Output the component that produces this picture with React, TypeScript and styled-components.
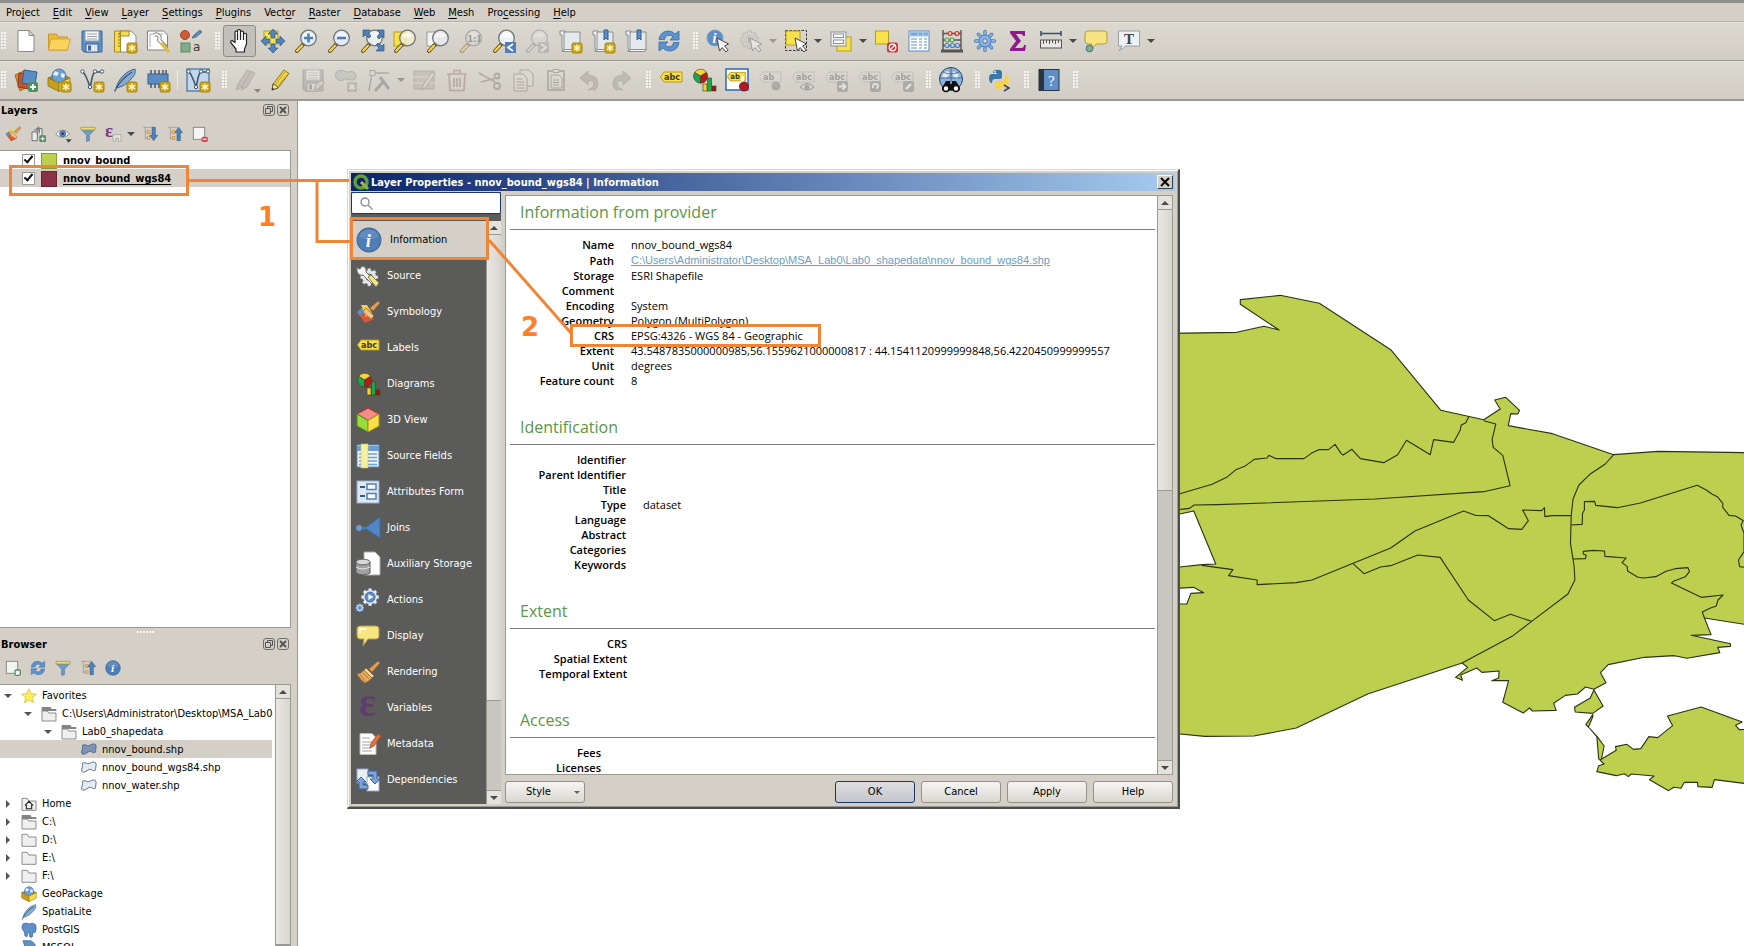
import React from 'react';
import styled, { createGlobalStyle, css } from 'styled-components';

const UI = '"DejaVu Sans Condensed", "DejaVu Sans", sans-serif';
const DOC = '"Open Sans", "Noto Sans", sans-serif';
const FACE = '#d4d0c8';
const LINE = '#9c9990';
const ORANGE = '#f08536';

const Global = createGlobalStyle`
  *, *::before, *::after { box-sizing: border-box; }
  html, body { margin: 0; height: 100%; overflow: hidden; background: #fff; }
  body { font: 11px/18px ${UI}; color: #000; }
  button, input { font: inherit; color: inherit; margin: 0; }
  ul { list-style: none; margin: 0; padding: 0; }
  svg { display: block; flex: none; overflow: visible; }
`;

/* ---------- icons ---------- */

const Lens = ({ body = '#eef2f6', x = 0 }: { body?: string; x?: number }) => (
  <g transform={`translate(${x} 0)`}>
    <path d="M9.500 15 3 22" stroke="#5c4d1c" strokeWidth="4" strokeLinecap="round" />
    <path d="M8 16.700 3.200 21.800" stroke="#f5d152" strokeWidth="2.400" strokeLinecap="round" />
    <circle cx="14.500" cy="9" r="7.800" fill={body} stroke="#6f7476" strokeWidth="1.300" />
    <path d="M9 7a6 6 0 0 1 11 0q-5 3-11 0z" fill="#fff" opacity=".6" />
  </g>
);
const Star = () => (
  <g>
    <rect x="14" y="14" width="10" height="10" rx="1.500" fill="#c9a419" stroke="#a8860c" />
    <path d="M19 15.500v7M15.800 17.200l6.400 3.600M22.200 17.200l-6.400 3.600" stroke="#fff6c8" strokeWidth="1.400" />
  </g>
);
const Cursor = ({ x = 0, y = 0 }: { x?: number; y?: number }) => (
  <path transform={`translate(${x} ${y})`} d="M11 9l2.500 13 2.700-3.500 3.800 4.500 2.200-2-3.700-4 4-2z" fill="#fff" stroke="#444" strokeWidth="1" />
);
const Tag = ({ t = 'abc' }: { t?: string }) => (
  <g>
    <path d="M5 4h18v10H5L1.500 9z" fill="#f7e04c" stroke="#b89a1c" />
    <text x="5" y="12" fontSize="9" fontWeight="700" fontFamily="DejaVu Sans Condensed" fill="#40391a">{t}</text>
  </g>
);
const Bars = () => (
  <g stroke="#3c3c20" strokeWidth=".6">
    <path d="M8.500 8 2.600 4.500A7 7 0 0 1 8.500 1.200a7 7 0 0 1 6 3z" fill="#f7d33c" />
    <path d="M8.500 8v7.200A7 7 0 0 1 2.600 4.500z" fill="#1ea550" />
    <path d="M8.500 8l6.100-3.500a7 7 0 0 1-6.100 10.700z" fill="#b81a1a" />
    <rect x="11" y="16" width="4" height="7" fill="#f5cf2c" />
    <rect x="15.500" y="10" width="4" height="13" fill="#1ea550" />
    <rect x="20" y="18" width="4" height="5" fill="#9c1616" />
  </g>
);
const Cog = ({ c = '#6f9bd0', s = '#4977a8', w = '#fff' }: { c?: string; s?: string; w?: string }) => (
  <g>
    <g stroke={s} strokeWidth="4.500">
      <path d="M12 1.500v21M1.500 12h21M4.600 4.600l14.800 14.800M19.400 4.600 4.600 19.400" />
    </g>
    <circle cx="12" cy="12" r="8.500" fill={s} />
    <g stroke={c} strokeWidth="3">
      <path d="M12 2v20M2 12h20M5 5l14 14M19 5 5 19" />
    </g>
    <circle cx="12" cy="12" r="8" fill={c} />
    <circle cx="12" cy="12" r="4" fill={w} stroke={s} strokeWidth=".8" />
  </g>
);
const InfoDisc = () => (
  <g>
    <circle cx="12" cy="12" r="11" fill="#4f7db5" stroke="#3c689c" />
    <path d="M3 9a9.500 9.500 0 0 1 18 0q-9 5-18 0z" fill="#7ba0cc" opacity=".45" />
    <text x="9" y="18" fontSize="17" fontStyle="italic" fontWeight="700" fontFamily="Liberation Serif" fill="#fff">i</text>
  </g>
);
const RefreshShape = () => (
  <g fill="#5c93cf" stroke="#3a6ba4" strokeWidth=".8">
    <path d="M2 10.500C3 1 14 0 18 5l4-3v9h-9l3-3c-3-3-8-2-8.500 2.500z" />
    <path d="M22 13.500C21 23 10 24 6 19l-4 3v-9h9l-3 3c3 3 8 2 8.500-2.500z" />
  </g>
);
const Page = ({ fill = '#fff' }: { fill?: string }) => <path d="M4 1.500h11l5 5v16H4z M15 1.500v5h5" fill={fill} stroke="#8a8a86" />;
const Scroll = () => (
  <g>
    <path d="M2 2h5v18q0 2.500-2.500 2.500H4Q5 20 4 18V6H2z" fill="#f2f2f2" stroke="#898d90" />
    <path d="M6 3h16v17.500H6z" fill="#e6e9ec" stroke="#898d90" />
    <path d="M4 22.500h16q2 0 2-2H6q0 2-2 2" fill="#fafafa" stroke="#898d90" />
  </g>
);
const Cube = () => (
  <g stroke="#8c7210" strokeWidth=".8">
    <path d="M1 10l11-5 11 5-11 5z" fill="#a6861a" />
    <circle cx="12" cy="8" r="7" fill="#6d9fd4" stroke="#3f6fa5" />
    <path d="M8 3l4 2-2 3-4-1zM14 5l4 1-1 4-3-1z" fill="#e7eff7" stroke="none" />
    <path d="M1 10l11 5v8.500L1 18z" fill="#c89f1c" />
    <path d="M23 10l-11 5v8.500L23 18z" fill="#f6dc45" />
  </g>
);
const Feather = () => (
  <g>
    <path d="M3 20C6 10 13 3 22 1c1 4-1 7-4 10-4 5-9 8-15 9z" fill="#86abd2" stroke="#3b6590" />
    <path d="M1.500 23.500C5 16 11 9 19 4" stroke="#3b5874" strokeWidth="1.300" fill="none" />
  </g>
);
const VLine = ({ c = '#40586a' }: { c?: string }) => (
  <g stroke={c} fill="#fff">
    <path d="M3 4c3 3 5 9 7 15 2-6 2-14 5-15h7" fill="none" strokeWidth="1.600" />
    <circle cx="2.500" cy="3.500" r="1.700" /><circle cx="10" cy="19" r="1.700" /><circle cx="15" cy="3.500" r="1.700" /><circle cx="22" cy="3.500" r="1.700" />
  </g>
);
const Pencil = () => (
  <g>
    <path d="M4 22l1-6L16 2l5 3.500L10 20z" fill="#f3d64a" stroke="#8c7422" />
    <path d="M7 17 17 4M9 19 20 6" stroke="#b8982a" strokeWidth="1" />
    <path d="M4 22l1-6q4 1 5 4z" fill="#f3e4c0" stroke="#6a5a2a" /><path d="M4 22l.5-2.500L6 21z" fill="#222" />
  </g>
);
const Disk = () => (
  <g>
    <path d="M2 2h20v21H4l-2-2z" fill="#5f8fc6" stroke="#3d6898" />
    <rect x="5" y="2" width="14" height="10" fill="#f6f6f6" stroke="#8a9aac" />
    <path d="M7 5h10M7 7.500h10M7 10h10" stroke="#9aa3ad" />
    <rect x="6" y="15" width="12" height="8" fill="#dfe5ec" stroke="#3d6898" /><rect x="8" y="16.500" width="3" height="5" fill="#3d6898" />
  </g>
);
const Brush = () => (
  <g>
    <path d="M22 1 13 9l3 3 8-9z" fill="#e0a252" stroke="#9c6a28" strokeWidth=".8" />
    <path d="M10 8l8 8-2 2-8-8z" fill="#f2d7a5" stroke="#9c6a28" strokeWidth=".8" />
    <path d="M8 10l8 8q-4 4-7 5-4-2-8-9 4 0 7-4z" fill="#e2aa60" stroke="#9c6a28" strokeWidth=".8" />
    <path d="M4 15l5 6M7 13l6 6" stroke="#b97d36" />
  </g>
);
const PaintBrush = () => (
  <g>
    <path d="M1 12l8 11 9-4L8 7z" fill="#d9553b" /><path d="M1 12l7-6 3 4-7 6z" fill="#5d8dc4" /><path d="M5 5h6l5 8-6 4z" fill="#f2cf45" />
    <path d="M22 1 14 8l3 3 7-8z" fill="#e0a252" stroke="#9c6a28" strokeWidth=".8" />
    <path d="M10 8l8 8-3 3-8-7z" fill="#eec488" stroke="#9c6a28" strokeWidth=".8" />
  </g>
);
const Arrows = ({ c = '#5584bb' }: { c?: string }) => (
  <g fill={c} stroke="#2f587f" strokeWidth=".7">
    <path d="M12 0l5 5h-3v4h-4V5H7zM12 24l5-5h-3v-4h-4v4H7zM0 12l5-5v3h4v4H5v3zM24 12l-5-5v3h-4v4h4v3z" />
  </g>
);
const Funnel = () => (
  <g>
    <path d="M2 5h20l-8 9v8l-4 1v-9z" fill="#6f9cc9" stroke="#44709c" />
    <path d="M1.500 2h21v4h-21z" fill="#efdc6a" stroke="#9a8a3c" />
  </g>
);
const TreeMarks = () => (
  <g>
    <path d="M2 2h14M5 2v18M5 9h5M5 18h5" stroke="#8e8e8a" fill="none" />
    <rect x="8" y="7" width="4" height="4" fill="#f7c27a" stroke="#d98b2b" /><rect x="8" y="16" width="4" height="4" fill="#f7c27a" stroke="#d98b2b" />
  </g>
);
const Folder = () => <path d="M1.500 3.500h8l2 4h11v14h-21z" fill="#efefef" stroke="#87878a" strokeWidth="1.400" />;
const Drawer = () => (
  <g><path d="M1 1.500h13l2 3h7v3H1z" fill="#848484" /><path d="M1.500 7.500h8l2 3h11v12h-21z" fill="#efefef" stroke="#87878a" strokeWidth="1.400" /></g>
);
const Poly = ({ c = '#e3ebf3' }: { c?: string }) => (
  <path d="M2 5c4-3 7 2 11 0 4-2 7-3 9-1 2 4-1 8 0 11-4 3-6-2-10-1-4 3-8 6-11 3C0 13 4 9 2 5z" fill={c} stroke="#4c6278" strokeWidth="1.300" />
);
const Wrench = () => (
  <path d="M2 2l4 3 2-1V1c4 0 6 3 5 7l10 11q1 4-3 4L9 12c-4 1-7-1-7-6l3 2" fill="#f4f4f4" stroke="#6e6e6a" strokeWidth="1" />
);
const Bubble = () => <path d="M4 2h16q3 0 3 3v7q0 3-3 3h-8l-5 7 1-7H4q-3 0-3-3V5q0-3 3-3z" fill="#f7e583" stroke="#b49c39" />;

const ICONS: Record<string, React.ReactNode> = {
  new: <Page />,
  open: <g><path d="M1.500 5h8l2 3h9v13h-19z" fill="#eab93a" stroke="#c9962a" /><path d="M1.500 21 4 10h19.500l-3 11z" fill="#fad45c" stroke="#d7a536" /></g>,
  save: <Disk />,
  newLayout: <g><path d="M7 2h11l5 5v16H7z" fill="#fff" stroke="#8a8a86" /><path d="M1.500 2h6v21h-6zM7 2h9v5H7z" fill="#f7da4e" stroke="#a68a24" /><path d="M5 5h2M5 8h2M5 11h2M5 14h2M5 17h2" stroke="#8a7420" /><Star /></g>,
  layouts: <g><path d="M1.500 2h16l4 4v15h-20z" fill="#fff" stroke="#7d8285" /><path d="M4 18V5h13" stroke="#a6abae" fill="none" /><path d="M8 6c4-2 7 2 5 5l8 8" stroke="#8b8b87" strokeWidth="4" fill="none" /><path d="M8 6c4-2 7 2 5 5l4 4" stroke="#f2f2f2" strokeWidth="2.200" fill="none" /><path d="M16 15l6 7" stroke="#e1bd3f" strokeWidth="3.500" strokeLinecap="round" /></g>,
  styles: <g><circle cx="6" cy="6" r="4.500" fill="#cf5b33" stroke="#a34624" /><path d="M13 9l2-3 6-5 2 2-6 5z" fill="#5f88b6" stroke="#3f6389" strokeWidth=".8" /><rect x="2" y="14" width="9" height="9" fill="#7fae86" stroke="#5b8a62" /><text x="14" y="22" fontSize="12" fontFamily="DejaVu Sans" fill="#3a3a3a">a</text></g>,
  hand: <path d="M8 23v-3l-5-6q-1-2 1-2.500l3 2V3q1-2 2.500 0V1.500q1.500-2 3 0V3q1.500-2 3 0v2q1.800-1.500 3 0v10l-2 5v3zM9.500 4v7M12.500 3v8M15.500 4v7" fill="#fff" stroke="#222" strokeWidth="1.200" />,
  pan: <g><rect x="3" y="2" width="14" height="13" fill="#f8e24a" stroke="#b49c28" /><Arrows /></g>,
  zoomIn: <g><Lens body="#e3ecf5" /><path d="M14.500 4.500v9M10 9h9" stroke="#4e7fb8" strokeWidth="2.600" /></g>,
  zoomOut: <g><Lens body="#e3ecf5" /><path d="M10 9h9" stroke="#4e7fb8" strokeWidth="2.600" /></g>,
  zoomFull: <g><Lens body="#f0f4f8cc" /><path d="M3 1h7L8 3l3 4-2 2-4-3-2 2zM24 1v8l-2-2-3 3-2-2 3-4-3-3zM24 22h-8l3-3-3-3 2-2 4 3 2-2z" fill="#4e7fb8" stroke="#2f587f" strokeWidth=".7" /></g>,
  zoomSel: <g><rect x="1" y="3" width="12" height="14" fill="#f8e24a" stroke="#b49c28" /><Lens body="#f3eccfd9" /></g>,
  zoomLayer: <g><rect x="1" y="3" width="12" height="14" fill="#f4f4f4" stroke="#9a9a96" /><Lens body="#e9eaecd9" /></g>,
  zoomNative: <g opacity=".45"><Lens body="#dcdcdc" /><text x="8.500" y="12.500" fontSize="9" fontWeight="700" fontFamily="DejaVu Sans Condensed" fill="#555">1:1</text></g>,
  zoomLast: <g><Lens /><rect x="13" y="13" width="11" height="11" fill="#4e7fb8" /><path d="M21 15l-5 3.500 5 3.500" stroke="#fff" strokeWidth="1.800" fill="none" /></g>,
  zoomNext: <g opacity=".35" filter="grayscale(1)"><Lens body="#dcdcdc" /><rect x="13" y="13" width="11" height="11" fill="#8e8e8a" /><path d="M16 15l5 3.500-5 3.500" stroke="#fff" strokeWidth="1.800" fill="none" /></g>,
  newMap: <g><Scroll /><Star /></g>,
  newMark: <g><Scroll /><path d="M13 1h4v10l-2-2-2 2z" fill="#5b8cc4" stroke="#32608f" /><Star /></g>,
  marks: <g><Scroll /><path d="M13 1h4v10l-2-2-2 2z" fill="#5b8cc4" stroke="#32608f" /></g>,
  refresh: <RefreshShape />,
  identify: <g><circle cx="9" cy="9" r="8" fill="#5f8fc6" stroke="#7ba0c8" /><text x="6.500" y="14" fontSize="14" fontStyle="italic" fontWeight="700" fontFamily="Liberation Serif" fill="#fff">i</text><Cursor /></g>,
  action: <g opacity=".4"><g transform="scale(.88)"><Cog c="#c9c9c5" s="#7e7e7a" w="#e4e4e0" /></g><path d="M9 7.500l5 3-5 3z" fill="#777" /><Cursor /></g>,
  select: <g><rect x="1.500" y="1.500" width="21" height="20" fill="none" stroke="#333" strokeDasharray="2.500 1.500" /><rect x="2" y="2" width="14" height="14" fill="#f8e24a" stroke="#b49c28" /><Cursor /></g>,
  selectForm: <g><rect x="8" y="8" width="14" height="14" fill="#f8e24a" stroke="#b49c28" /><rect x="2" y="3" width="15" height="14" fill="#f2f2f2" stroke="#8a8f92" /><rect x="4.500" y="5" width="10" height="3.500" fill="#fff" stroke="#8a8f92" /><rect x="4.500" y="11" width="10" height="3.500" fill="#fff" stroke="#8a8f92" /></g>,
  deselect: <g><rect x="1.500" y="2" width="13" height="13" fill="#f8e24a" stroke="#b49c28" /><rect x="13" y="13.500" width="11" height="10" rx="2" fill="#d8343a" /><circle cx="18.500" cy="18.500" r="3.300" fill="none" stroke="#fff" strokeWidth="1.300" /><path d="M16 21l5-5" stroke="#fff" strokeWidth="1.300" /></g>,
  table: <g><rect x="2" y="2" width="20" height="20" fill="#fff" stroke="#5c88b8" /><rect x="2.500" y="2.500" width="19" height="5" fill="#9cc0e6" /><path d="M4 5h6M12 5h3M17 5h4M4 10h6M4 13h6M4 16h6M4 19h6M12 10h3M12 13h3M12 16h3M12 19h3M17 10h3M17 13h3M17 16h3M17 19h3" stroke="#5b8cc4" /></g>,
  abacus: <g><path d="M3 1v20M21 1v20M3 4.500h18M3 11h18M3 16.500h18" stroke="#555" strokeWidth="1.400" /><path d="M1 22h22" stroke="#555" strokeWidth="3" /><g strokeWidth="1.200"><circle cx="10" cy="4.500" r="2" fill="#f4c0b8" stroke="#c23b30" /><circle cx="17" cy="4.500" r="2" fill="#f4c0b8" stroke="#c23b30" /><circle cx="7" cy="11" r="2" fill="#c8e8c2" stroke="#5e9e55" /><circle cx="12" cy="11" r="2" fill="#c8e8c2" stroke="#5e9e55" /><circle cx="7" cy="16.500" r="2" fill="#c2d8ee" stroke="#4e7fb8" /><circle cx="12.500" cy="16.500" r="2" fill="#c2d8ee" stroke="#4e7fb8" /><circle cx="17.500" cy="16.500" r="2" fill="#c2d8ee" stroke="#4e7fb8" /></g></g>,
  cog: <g><g stroke="#4a7dba" strokeWidth="3.400" strokeLinecap="round"><path d="M12 2.500v19M2.500 12h19M5.300 5.300l13.400 13.400M18.700 5.300 5.300 18.700" /></g><g stroke="#8ab2e0" strokeWidth="1.800" strokeLinecap="round"><path d="M12 2.500v19M2.500 12h19M5.300 5.300l13.400 13.400M18.700 5.300 5.300 18.700" /></g><circle cx="12" cy="12" r="6" fill="#8ab2e0" stroke="#4a7dba" /><circle cx="12" cy="12" r="2.300" fill="#dcd8d1" stroke="#4a7dba" /></g>,
  sigma: <path d="M4 2h15v5h-2q0-2-3-2H10l5 7-6 7h6q3 0 3-3h2l-1 6H4v-2l6-8-6-8z" fill="#8f1a8c" />,
  ruler: <g><path d="M2 4.500h20M2 2v5M22 2v5" stroke="#33536f" strokeWidth="1.600" /><rect x="1.500" y="11" width="21" height="8" fill="#e8e8e4" stroke="#555" /><path d="M4.500 11v4M7.500 11v3M10.500 11v4M13.500 11v3M16.500 11v4M19.500 11v3" stroke="#555" /></g>,
  tip: <g><Bubble /><circle cx="5.500" cy="19.500" r="3.400" fill="#7fae86" stroke="#4b6f9a" /></g>,
  textNote: <g><path d="M1.500 2h21v15H9l-7 5 3-5H1.500z" fill="#eef2f6" stroke="#9aa0a5" /><text x="7" y="14.500" fontSize="15" fontWeight="700" fontFamily="Liberation Serif" fill="#444">T</text></g>,
  dataSource: <g><path d="M1 7l9-4 3 16-7 4z" fill="#dd8a2e" stroke="#a8641c" /><path d="M5 5l13 2-3 14-11-2z" fill="#c6532f" stroke="#8e3b1f" /><path d="M10 2l13 2-2 13-13-2z" fill="#5b8cc4" stroke="#335f90" /><rect x="14" y="14" width="10" height="10" rx="2" fill="#4b8f63" /><path d="M19 16v6M16 19h6" stroke="#fff" strokeWidth="1.800" /></g>,
  geopackage: <g><Cube /><Star /></g>,
  shapefile: <g><VLine /><Star /></g>,
  spatialite: <g><Feather /><Star /></g>,
  memory: <g><path d="M5 2v18M9 2v18M13 2v18M17 2v18M20 2v18" stroke="#444c55" strokeWidth="1.400" /><rect x="2" y="6" width="20" height="10" fill="#5b8cc4" stroke="#335f90" /><Star /></g>,
  virtual: <g><rect x="1" y="1" width="22" height="22" fill="#c3d7ec" stroke="#5b83ae" strokeWidth="1.500" /><VLine /><Star /></g>,
  editsOff: <g opacity=".4"><path d="M1 22l2-6L12 2l5 2L7 19z" fill="#a7a19a" stroke="#7e7973" /><path d="M6 22l2-5L16 3l4 2-8 14z" fill="#a7a19a" stroke="#7e7973" /><path d="M19 21h7l-3.500 4z" fill="#222" /></g>,
  pencil: <Pencil />,
  saveEdits: <g opacity=".35"><g filter="grayscale(1)"><Disk /></g><path d="M13 22l2-6 6-4 2 3-6 6z" fill="#c9c4bb" stroke="#6e6a64" /></g>,
  addPoly: <g opacity=".35"><path d="M2 5c4-6 9 0 13-1 6-2 9 4 6 7-4 3-8-2-12 1-5 2-9-3-7-7z" fill="#a8b4a6" stroke="#667" /><rect x="13" y="14" width="10" height="10" rx="1" fill="#8d8a80" /><path d="M18 15.500v7M15 17.200l6 3.600M21 17.200l-6 3.600" stroke="#fff" strokeWidth="1.300" /></g>,
  vertex: <g opacity=".38" stroke="#666" fill="none"><path d="M5 5 2 23M5 5h17" strokeWidth="1.400" /><rect x="3" y="2.500" width="5" height="5" fill="#ddd" /><path d="M8 23l9-10M13 9l9 12" strokeWidth="3" /></g>,
  attrs: <g opacity=".35"><rect x="2" y="3" width="20" height="18" fill="#a8a58c" stroke="#77746a" /><path d="M2 9h20M2 15h20" stroke="#e4e1da" /><path d="M10 22l1-5L20 4l3 2-9 13z" fill="#d8d4cc" stroke="#66635c" /></g>,
  trash: <g opacity=".35" stroke="#8c5c58" strokeWidth="1.700" fill="none"><path d="M2 6h20M9 5V2.500h6V5M4 6l1 16.500h14L20 6M9 10v9M12 10v9M15 10v9" /></g>,
  cut: <g opacity=".4" stroke="#77736c" strokeWidth="1.800" fill="none"><path d="M1 5l16 9M3 14 22 9" /><circle cx="19" cy="8" r="2.500" /><circle cx="19" cy="18" r="3" /></g>,
  copy: <g opacity=".45" fill="#e0ddd6" stroke="#77736c"><path d="M9 2h9l4 4v12H9z" /><path d="M3 6h9l4 4v13H3z" /><path d="M5.500 11h6M5.500 14h8M5.500 17h8M5.500 20h8" /></g>,
  paste: <g opacity=".45" fill="#e0ddd6" stroke="#77736c"><rect x="4" y="3" width="16" height="19" strokeWidth="1.600" /><path d="M9 1.500h6v3H9z" /><path d="M7 7h8l3 3v10H7zM9 12h6M9 14.500h6M9 17h6" /></g>,
  undo: <path opacity=".4" d="M3 10l8-7v4q10 0 10 9 0 3-3 6-5-1-7 0 6-2 6-6t-6-3v4z" fill="#a18d8a" stroke="#8a7673" />,
  redo: <path opacity=".4" d="M21 10l-8-7v4q-10 0-10 9 0 3 3 6 5-1 7 0-6-2-6-6t6-3v4z" fill="#949a92" stroke="#7c8279" />,
  label: <Tag />,
  diagram: <Bars />,
  labelPin: <g><rect x="1" y="1" width="22" height="21" fill="#fff" stroke="#2f68b5" strokeWidth="1.500" /><g transform="translate(1 1) scale(.85)"><Tag t="ab" /></g><path d="M17.500 8v9" stroke="#fff" strokeWidth="3" /><circle cx="19" cy="18.500" r="4.500" fill="#b11c22" stroke="#861318" /></g>,
  lab1: <g opacity=".35"><g filter="grayscale(1)"><Tag t="ab" /></g><circle cx="18" cy="18" r="4.500" fill="#666" /></g>,
  lab2: <g opacity=".35"><g filter="grayscale(1)"><Tag /></g><path d="M9 19q7-7 14 0-7 6-14 0z" fill="#ddd" stroke="#333" /><circle cx="16" cy="19" r="2.500" fill="#555" /></g>,
  lab3: <g opacity=".35"><g filter="grayscale(1)"><Tag /></g><rect x="13" y="13" width="11" height="11" rx="2" fill="#666" /><path d="M15 18.500h6M18.500 15.500l3 3-3 3" stroke="#fff" strokeWidth="2" fill="none" /></g>,
  lab4: <g opacity=".35"><g filter="grayscale(1)"><Tag /></g><rect x="13" y="13" width="11" height="11" rx="2" fill="#666" /><path d="M16 20v-2q0-2 2.500-2t2.500 2-2 2.500" stroke="#fff" strokeWidth="1.800" fill="none" /></g>,
  lab5: <g opacity=".35"><g filter="grayscale(1)"><Tag /></g><rect x="13" y="13" width="11" height="11" rx="2" fill="#666" /><path d="M16 21l5-5" stroke="#fff" strokeWidth="2.400" /></g>,
  search: <g><circle cx="12" cy="11" r="11.500" fill="#8db2dc" stroke="#2c4460" /><path d="M5 4q5-2 6 2l-4 4-4-1zM14 3l6 4-2 4-4-3z" fill="#dfeaf5" /><path d="M12 0v20M1 10h22M4 4q8 4 16 0" stroke="#35506e" fill="none" strokeWidth=".7" /><path d="M3 20l4-7h4v3h2v-3h4l4 7v2H3z" fill="#111" /><circle cx="7" cy="20.500" r="3" fill="#fff" stroke="#111" strokeWidth="1.600" /><circle cx="17" cy="20.500" r="3" fill="#fff" stroke="#111" strokeWidth="1.600" /></g>,
  python: <g><path d="M8 2q5-1 6 2v5q0 2-2 2H7q-3 0-3 4-3 0-3-5 0-4 3-4h5V5H5q0-3 3-3z" fill="#3c77a9" /><path d="M13 21q-5 1-6-2v-4q0-2 2-2h5q3 0 3-6 4 0 4 5t-4 5h-5v1h4q0 2-3 3z" fill="#f8d347" /><circle cx="7" cy="3.800" r=".9" fill="#fff" /><path d="M16 17l5 3-5 3" stroke="#444" strokeWidth="1.500" fill="none" /></g>,
  help: <g><rect x="2" y="1.500" width="20" height="21" fill="#5f8fc6" stroke="#2a3542" /><rect x="2" y="1.500" width="5" height="21" fill="#2a3542" /><text x="11" y="17.500" fontSize="15" fontFamily="Liberation Serif" fill="#fff">?</text></g>,
  paint: <PaintBrush />,
  addGroup: <g><path d="M3 9h8v13H3zM6 6h8v3M9 4h9v13" fill="#ecece8" stroke="#6d7276" strokeWidth="1.500" /><path d="M11 13V3q2-4 3 0v8" stroke="#6d7276" fill="none" strokeWidth="1.300" /><rect x="14" y="14" width="10" height="10" rx="2" fill="#4b8f63" /><path d="M19 16v6M16 19h6" stroke="#fff" strokeWidth="1.800" /></g>,
  eye: <g><path d="M1 12q10-12 21 0-11 10-21 0z" fill="#eef3f8" stroke="#7f8b97" strokeWidth="1.300" /><circle cx="11.500" cy="11.500" r="4.500" fill="#5f8fc6" stroke="#2f4c6c" /><circle cx="11.500" cy="11.500" r="1.800" fill="#1d2b3a" /><path d="M16 20h9l-4.500 5z" fill="#444" /></g>,
  funnel: <Funnel />,
  exprFilter: <g><text x="0" y="16" fontSize="28" fontWeight="700" fontFamily="Liberation Serif" fill="#7b3a82">ε</text><path d="M12 13h12v10h-4v-5h-4v5h-4z" fill="#e4e4e0" stroke="#9a9a96" /></g>,
  expand: <g><TreeMarks /><path d="M15 2h5v12h3.500l-6 8-6-8H15z" fill="#4e82bd" stroke="#2f587f" strokeWidth=".8" /></g>,
  collapse: <g><TreeMarks /><path d="M15 22h5V10h3.500l-6-8-6 8H15z" fill="#4e82bd" stroke="#2f587f" strokeWidth=".8" /></g>,
  remove: <g><rect x="2" y="2" width="17" height="18" fill="#f4f4f2" stroke="#8a8a86" strokeWidth="1.500" /><rect x="14" y="16" width="10" height="8" rx="3" fill="#d8454a" /><path d="M16 20h6" stroke="#fff" strokeWidth="1.800" /></g>,
  addLayer: <g><rect x="2" y="2" width="17" height="18" fill="#f4f4f2" stroke="#8a8a86" strokeWidth="1.500" /><rect x="15" y="15" width="8" height="8" rx="2" fill="#fff" stroke="#4b8f63" strokeWidth="2" /></g>,
  info: <InfoDisc />,
  star: <path d="M12 1l3.200 7.500 8 .6-6.200 5.200 2 8L12 18l-7 4.300 2-8L.8 9.100l8-.6z" fill="#fbee5c" stroke="#d4b428" />,
  folder: <Folder />,
  drawer: <Drawer />,
  home: <g><Folder /><path d="M6 14l6-6 6 6M8 13v6h8v-6" stroke="#222" strokeWidth="1.600" fill="none" /></g>,
  poly: <Poly />,
  polySel: <Poly c="#7d93b8" />,
  gpkg: <Cube />,
  feather: <Feather />,
  elephant: <path d="M3 3q5-3 9 0 6-3 10 1 2 6-1 12l-3-1-1 7q-3 2-4 0l-1-7-2 2-1 5-3-1-1-6Q-1 9 3 3z" fill="#5f8fc6" stroke="#335f90" />,
  mssql: <path d="M3 1h11q8 3 8 11v12H10z" fill="#5f8fc6" stroke="#335f90" />,
  source: <g><g transform="translate(3 3) scale(.85)"><Cog c="#e4e7ea" s="#8b97a3" w="#5b5b59" /></g><path d="M1 3q1 2 3 2l2-3q5 1 4 6l9 9-3 3-9-9Q2 12 1 7z" fill="#f4f4f4" stroke="#6e6e6a" /><path d="M12 13l3-2 8 8-3 4z" fill="#efe39a" stroke="#8a7c3c" /></g>,
  cube3d: <g stroke="#8c3b1c" strokeWidth="1"><path d="M12 0l11 6-11 6.500L1 6z" fill="#f58a8a" stroke="#c22626" /><path d="M1 6l11 6.500V24L1 18z" fill="#9adb3c" stroke="#538c18" /><path d="M23 6l-11 6.500V24l11-6z" fill="#f8e048" stroke="#b0941c" /></g>,
  fields: <g><rect x="1" y="1" width="22" height="22" fill="#f0f4f8" stroke="#5c88b8" /><path d="M1 2h22v5H1z" fill="#6d9fd4" /><path d="M3 10h18M3 13.500h18M3 17h18M3 20.500h18" stroke="#6d9fd4" strokeWidth="1.500" /><rect x="5" y="0" width="7" height="24" fill="#f4f0a0" stroke="#cfc560" strokeWidth=".6" /></g>,
  form: <g><rect x="1" y="1" width="22" height="22" fill="#dce8f4" stroke="#8fb0d2" /><path d="M4 7h5M4 16h5" stroke="#3a5878" strokeWidth="2" /><rect x="11" y="4" width="9" height="5.500" fill="#fff" stroke="#4e7fb8" strokeWidth="1.500" /><rect x="11" y="13.500" width="9" height="5.500" fill="#fff" stroke="#4e7fb8" strokeWidth="1.500" /></g>,
  joins: <g><circle cx="3" cy="12" r="3" fill="#6b9bd2" /><path d="M6 12h5" stroke="#4e82bd" strokeWidth="2" /><path d="M24 1v21L9 12z" fill="#4e86c6" stroke="#3a6ca6" /></g>,
  storage: <g><path d="M8 0h11l5 5v18H8z" fill="#fff" stroke="#aaa" /><path d="M0 10v11q7 4 14 0V10z" fill="#a0a0a0" stroke="#5b5b5b" /><ellipse cx="7" cy="10" rx="7" ry="2.800" fill="#d8d8d8" stroke="#6b6b6b" /><path d="M0 15q7 4 14 0" stroke="#e8e8e8" fill="none" /></g>,
  actions: <g><g transform="translate(4 -1) scale(.84)"><Cog c="#e6edf4" s="#97a8ba" w="#5f8fc6" /><circle cx="12" cy="12" r="6" fill="#5f8fc6" stroke="#3a6690" /><path d="M10 8.500l6 3.500-6 3.500z" fill="#fff" /></g><g transform="translate(-1 15) scale(.4)"><Cog c="#b8cde4" s="#5f8fc6" w="#5f8fc6" /></g></g>,
  display: <g><Bubble /><path d="M4 9V5h6" stroke="#fff" strokeWidth="1.300" /></g>,
  brush: <Brush />,
  epsilon: <text x="3" y="20" fontSize="40" fontWeight="700" fontFamily="Liberation Serif" fill="#5f3c6e">ε</text>,
  metadata: <g><path d="M4 1.500h12l4 4v17H4z" fill="#fff" stroke="#bbb" /><path d="M6 6h8M6 10h11M6 13h11M6 16h9M6 19h10" stroke="#a3a3a3" /><path d="M14 16l1-5 7-9 3 2-7 10z" fill="#e2723a" stroke="#9d4a20" strokeWidth=".7" /></g>,
  deps: <g><rect x="1" y="1" width="11" height="14" fill="#e8eef6" stroke="#8fa8c6" /><rect x="11" y="9" width="12" height="14" fill="#fff" stroke="#8fa8c6" /><path d="M12 3h9v8h3l-5 5-5-5h3V7h-5z" fill="#7ea4d8" stroke="#3a66a4" /><path d="M12 21H3v-7H0l5-5 5 5H7v3h5z" fill="#7ea4d8" stroke="#3a66a4" /></g>,
  flag: <path d="M1 4h6v3h9v4H1z" fill="#f2b53a" />,
};

const Icon = ({ name, size = 24 }: { name: string; size?: number }) => (
  <svg width={size} height={size} viewBox="0 0 24 24" fill="none" aria-hidden="true">{ICONS[name]}</svg>
);

/* ---------- main window chrome ---------- */

const Window = styled.div`
  display: flex;
  flex-direction: column;
  height: 100vh;
  background: ${FACE};
  border-top: 3px solid #8f8f8d;
  overflow: hidden;
`;
const MenuBar = styled.nav`
  display: flex;
  gap: 13px;
  height: 19px;
  padding-left: 6px;
  border-bottom: 1px solid #b3b0a8;
`;
const MenuItem = styled.button`
  padding: 2px 0 0;
  border: 0;
  background: none;
  line-height: 16px;
  u { text-underline-offset: 2px; }
`;
const Toolbar = styled.div<{ $last?: boolean }>`
  display: flex;
  height: ${p => (p.$last ? 40 : 39)}px;
  padding-bottom: 2px;
  border-top: 1px solid #e6e3dd;
  border-bottom: ${p => (p.$last ? 2 : 1)}px solid ${LINE};
  background: linear-gradient(#dcd9d1, #d1cdc5);
`;
const Group = styled.div`
  display: flex;
  align-items: center;
  padding-right: 7px;
`;
const Grip = styled.span`
  width: 9px;
  height: 18px;
  border: 0 solid transparent;
  border-width: 0 2px 0 1px;
  background: radial-gradient(circle at 1px 1px, #f6f5f2 1px, transparent 1px) 0 0 / 3px 3px padding-box;
`;
const ToolButton = styled.button<{ $active?: boolean }>`
  display: flex;
  align-items: center;
  justify-content: center;
  width: 33px;
  height: 32px;
  padding: 0;
  border: 1px solid ${p => (p.$active ? '#8f8c85' : 'transparent')};
  border-radius: 3px;
  background: ${p => (p.$active ? '#c3c0b9' : 'none')};
`;
const DropButton = styled.button<{ $dim?: boolean }>`
  width: 12px;
  height: 32px;
  padding: 0;
  border: 0;
  background: none;
  &::after {
    content: '';
    display: block;
    margin: 0 2px;
    border: 4px solid transparent;
    border-bottom: 0;
    border-top-color: ${p => (p.$dim ? '#9b9892' : '#4a4a48')};
  }
`;
const Divider = styled.span`
  width: 1px;
  height: 20px;
  margin: 0 3px;
  background: #eceae5;
`;
const Body = styled.main`
  display: flex;
  flex: 1;
  min-height: 0;
`;

/* ---------- docked panels ---------- */

const Docks = styled.aside`
  display: flex;
  flex-direction: column;
  width: 298px;
  flex: none;
  margin-bottom: -14px;
  border-right: 1px solid ${LINE};
  padding-right: 6px;
`;
const Dock = styled.section<{ $height?: number }>`
  display: flex;
  flex-direction: column;
  flex: ${p => (p.$height ? `0 0 ${p.$height}px` : '1')};
  min-height: 0;
`;
const DockTitle = styled.header`
  display: flex;
  align-items: center;
  gap: 2px;
  height: 18px;
  padding: 0 2px 0 1px;
  h2 { flex: 1; margin: 0; padding-top: 1px; font-size: 11px; }
`;
const CaptionButton = styled.button`
  display: grid;
  place-items: center;
  width: 12px;
  height: 12px;
  padding: 0;
  border: 1px solid #6f6d68;
  border-radius: 3px;
  background: none;
`;
const DockTools = styled.div`
  display: flex;
  align-items: center;
  height: 31px;
  padding-bottom: 2px;
`;
const SmallTool = styled.button`
  display: grid;
  place-items: center;
  width: 25px;
  height: 22px;
  padding: 0;
  border: 0;
  background: none;
`;
const Splitter = styled.div`
  height: 7px;
  flex: none;
  display: grid;
  place-items: center;
  &::after { content: ''; width: 18px; height: 2px; background: repeating-linear-gradient(90deg, #f8f7f5 0 2px, ${FACE} 2px 3px); }
`;
const TreeBox = styled.div`
  display: flex;
  flex: 1;
  min-height: 0;
  overflow: hidden;
  border: 1px solid ${LINE};
  border-left: 0;
  background: #fff;
`;
const Tree = styled.ul`
  flex: 1;
  min-width: 0;
`;
const LayerRow = styled.li<{ $current?: boolean }>`
  display: flex;
  align-items: center;
  height: 18px;
  padding: 1px 0 0 22px;
  font-weight: 700;
  ${p => p.$current && css`background: ${FACE}; text-decoration: underline; text-underline-offset: 2px;`}
  label { display: flex; align-items: center; gap: 6px; }
`;
const LayerName = styled.span`
  padding-top: 1px;
`;
const Check = styled.input`
  appearance: none;
  width: 13px;
  height: 13px;
  border: 1px solid #9a9a96;
  background: #fff;
  &:checked::after {
    content: '';
    display: block;
    width: 5px;
    height: 9px;
    margin: -1px 0 0 3px;
    border: solid #111;
    border-width: 0 2px 2px 0;
    transform: rotate(40deg);
  }
`;
const Swatch = styled.span<{ $color: string }>`
  width: 16px;
  height: 16px;
  background: ${p => p.$color};
  border: 1px solid rgba(0, 0, 0, 0.25);
`;
const BrowserTree = styled(Tree)`
  padding-top: 1px;
  margin-right: 3px;
`;
const BrowserRow = styled.li<{ $depth: number; $selected?: boolean }>`
  display: flex;
  align-items: center;
  gap: 5px;
  height: 18px;
  padding-top: 2px;
  padding-left: ${p => 4 + p.$depth * 20}px;
  white-space: nowrap;
  background: ${p => (p.$selected ? FACE : 'none')};
`;
const Twisty = styled.span<{ $state?: 'open' | 'closed' }>`
  width: 8px;
  height: 8px;
  margin-right: 4px;
  ${p => p.$state === 'open' && css`border: 4px solid transparent; border-top-color: #555; border-bottom: 0; height: 4px;`}
  ${p => p.$state === 'closed' && css`border: 4px solid transparent; border-left-color: #555; border-right: 0; width: 4px; margin: 0 6px 0 2px;`}
`;

/* ---------- scroll bars ---------- */

const ScrollBar = styled.div`
  display: flex;
  flex-direction: column;
  width: 15px;
  flex: none;
  border-left: 1px solid ${LINE};
  background: #c9c6c1;
`;
const ScrollEnd = styled.button<{ $down?: boolean }>`
  display: grid;
  place-items: center;
  height: 14px;
  flex: none;
  padding: 0;
  border: 0 solid ${LINE};
  border-${p => (p.$down ? 'top' : 'bottom')}-width: 1px;
  background: #e4e2dd;
  &::after {
    content: '';
    border: 4px solid transparent;
    border-${p => (p.$down ? 'bottom' : 'top')}-width: 0;
    border-${p => (p.$down ? 'top' : 'bottom')}-color: #4a4a48;
  }
`;
const Track = styled.div`
  flex: 1;
  min-height: 0;
`;
const Thumb = styled.div<{ $share: number }>`
  height: ${p => p.$share}%;
  border-bottom: 1px solid ${LINE};
  background: linear-gradient(90deg, #e9e7e3, #d9d6d0);
`;
const Scroller = ({ share }: { share: number }) => (
  <ScrollBar>
    <ScrollEnd aria-label="Scroll up" />
    <Track><Thumb $share={share} /></Track>
    <ScrollEnd $down aria-label="Scroll down" />
  </ScrollBar>
);

/* ---------- map ---------- */

const MapPane = styled.section`
  flex: 1;
  min-width: 0;
  background: #fff;
  overflow: hidden;
`;
const MapSvg = styled.svg`
  width: 100%;
  height: 100%;
  path { stroke: #2b3210; stroke-width: 1.1px; vector-effect: non-scaling-stroke; stroke-linejoin: round; }
`;
const DISTRICTS = [
  'M0,160L182,157 257,139 298,150 192,73 192,59 301,46 408,70 603,209 740,391 857,419 902,387 887,360 917,352 955,391 950,402 931,401 924,437 1045,461 1212,524 1333,514 1700,520 1700,1056 1460,1014 1478,1064 1424,1066 1531,1091 1531,1099 1496,1102 1502,1118 1412,1135 1378,1127 1296,1132 1197,1154 1176,1178 1191,1208 1158,1228 1135,1221 1113,1242 1080,1246 1048,1270 1055,1291 990,1293 982,1284 965,1299 909,1267 925,1202 879,1202 898,1194 899,1173 852,1177 838,1164 794,1185 799,1201 780,1192 813,1162 798,1149 540,1242 345,1344 229,1368 95,1369 0,1359Z',
  'M1158,1230L1183,1278 1155,1300 1107,1296 1105,1282 1148,1254Z',
  'M1155,1304L1136,1334 1143,1341 1155,1310Z',
  'M1143,1341L1167,1370 1186,1398 1178,1440 1171,1437 1166,1370Z',
  'M1178,1438L1219,1411 1217,1400 1248,1393 1266,1408 1286,1406 1308,1370 1332,1373 1373,1337 1359,1308 1451,1281 1563,1326 1545,1336 1555,1349 1700,1345 1700,1528 1487,1499 1481,1522 1442,1520 1441,1507 1405,1507 1396,1525 1376,1522 1362,1532 1310,1499 1322,1488 1260,1482 1252,1490 1242,1481 1219,1487 1166,1475 1171,1457 1186,1452 1175,1441Z',
];
const HOLES = [
  'M0,708L65,693 125,852 87,854 27,861 0,870Z',
  'M0,926L64,922 92,938 57,940 46,972 0,972Z',
];
const BORDERS = [
  'M0,650L27,641 115,613 155,592 180,569 204,559 230,538 265,534 270,526 290,536 366,536 386,520 406,509 433,509 451,493 467,520 473,525 497,508 520,536 584,548 622,524 646,481 711,524 720,479 775,487 793,450 795,436 808,428 816,410',
  'M857,422L890,432 880,478 883,502 909,526 929,617 857,635 560,657 130,674 66,675 53,685 0,692',
  'M1212,524L1189,552 1147,583 1117,615 1101,657 1096,707 1094,790 1101,838 1104,860 1106,900 1087,942 988,1024 937,1067 798,1149',
  'M1096,707L1043,707 1024,710 1023,683 1015,692 963,690 979,722 961,748 925,746 870,707 834,706 802,693 669,753 603,804 497,851 388,900 345,908 238,914 238,900 160,887 172,869 87,856',
  'M1096,735L1126,733 1127,700 1132,690 1132,665 1160,664 1163,676 1222,683 1285,669 1440,616 1465,630 1480,642 1495,650 1510,670 1510,682 1527,706 1545,708 1566,722 1560,735 1568,760 1568,815 1553,840 1556,860 1570,862',
  'M1101,837L1135,836 1137,826 1129,822 1129,814 1155,811 1187,813 1188,829 1246,834 1235,848 1249,860 1250,873 1277,891 1292,894 1327,890 1355,874 1380,866 1415,863 1419,875 1408,890 1375,904 1370,909 1451,952 1511,945 1497,960 1492,978 1475,985 1454,996 1460,1014',
  'M500,851L530,881 575,861 603,857 677,825 738,832 815,960 886,1022 930,1003 988,1024',
];
const SURVEY = 'translate(872 179) scale(0.36607 0.33333)';

/* ---------- layer properties dialog ---------- */

const Dialog = styled.section`
  position: absolute;
  left: 347px;
  top: 169px;
  display: flex;
  flex-direction: column;
  width: 833px;
  height: 640px;
  padding: 3px;
  background: ${FACE};
  border: 1px solid #d9d6cf;
  border-right: 2px solid #4d4d4b;
  border-bottom: 2px solid #4d4d4b;
  box-shadow: inset 1px 1px 0 #fff, inset -1px -1px 0 ${LINE};
`;
const TitleBar = styled.header`
  display: flex;
  align-items: center;
  gap: 2px;
  height: 18px;
  flex: none;
  padding: 0 2px;
  color: #fff;
  background: linear-gradient(90deg, #0a246a, #a6caf0);
  h1 { flex: 1; margin: 0; padding-top: 1px; font-size: 11px; }
`;
const CloseBox = styled.button`
  display: grid;
  place-items: center;
  width: 16px;
  height: 14px;
  padding: 0;
  border: 1px solid;
  border-color: #fff #404040 #404040 #fff;
  background: ${FACE};
`;
const DialogBody = styled.div`
  display: grid;
  grid-template-columns: 150px minmax(0, 1fr);
  grid-template-rows: minmax(0, 1fr);
  gap: 4px;
  flex: 1;
  min-height: 0;
  padding-top: 1px;
`;
const Sidebar = styled.div`
  display: flex;
  flex-direction: column;
  min-height: 0;
  background: #5b5b59;
`;
const SearchBox = styled.label`
  display: flex;
  align-items: center;
  gap: 4px;
  height: 22px;
  margin-bottom: 7px;
  padding-left: 8px;
  border: 1px solid #1c356f;
  border-radius: 2px;
  background: #fff;
  flex: none;
  input { flex: 1; min-width: 0; border: 0; outline: 0; background: none; }
`;
const SidebarBody = styled.div`
  display: flex;
  flex: 1;
  min-height: 0;
`;
const PageList = styled.ul`
  flex: 1;
  overflow: hidden;
`;
const PageButton = styled.button<{ $active?: boolean }>`
  display: flex;
  align-items: center;
  gap: ${p => (p.$active ? 8 : 7)}px;
  width: 100%;
  height: 36px;
  padding: 2px 5px 0;
  border: 0;
  white-space: nowrap;
  color: ${p => (p.$active ? '#000' : '#fff')};
  background: ${p => (p.$active ? FACE : 'none')};
`;
const Content = styled.div`
  display: flex;
  flex-direction: column;
  min-width: 0;
  min-height: 0;
  padding: 3px 2px 1px 0;
`;
const Report = styled.div`
  display: flex;
  flex: 1;
  min-height: 0;
  border: 1px solid ${LINE};
  background: #fff;
`;
const ReportText = styled.article`
  flex: 1;
  min-width: 0;
  overflow: hidden;
  padding: 3px 2px 0 4px;
  font: 11px/15px ${DOC};
  h2 {
    margin: 0;
    padding: 1px 0 5px 10px;
    border-bottom: 1px solid #7d7d7d;
    font: 400 16px/24px ${DOC};
    color: #5c9646;
  }
`;
const Facts = styled.table<{ $label: number }>`
  margin: 7px 0 26px;
  border-collapse: collapse;
  th, td { height: 15px; padding: 0; white-space: nowrap; }
  th { width: ${p => p.$label}px; text-align: right; font-weight: 600; }
  td { padding-left: 17px; text-align: left; }
  tr:has(a) td { height: 16px; }
  a { font-family: "Liberation Sans", sans-serif; color: #6e9cc4; }
`;
const Actions = styled.footer`
  display: flex;
  gap: 6px;
  padding-top: 6px;
`;
const PushButton = styled.button<{ $primary?: boolean }>`
  width: 80px;
  height: 22px;
  padding: 0;
  border: 1px solid ${p => (p.$primary ? '#1c356f' : '#94918a')};
  border-radius: 3px;
  background: ${p => (p.$primary ? 'linear-gradient(#dedee2, #c4c4cc)' : 'linear-gradient(#f6f5f3, #dad7d1)')};
`;
const MenuButton = styled(PushButton)`
  display: flex;
  align-items: center;
  justify-content: space-between;
  margin-right: auto;
  padding: 0 4px 0 20px;
  &::after { content: ''; border: 3px solid transparent; border-top-color: #666; border-bottom: 0; }
`;

/* ---------- annotations drawn above everything ---------- */

const Markup = styled.svg`
  position: absolute;
  left: 0;
  top: 0;
  width: 100%;
  height: 100%;
  pointer-events: none;
  text { font: 700 26px "DejaVu Sans", sans-serif; fill: #ff8126; }
`;

/* ---------- data ---------- */

const MENUS: [string, number][] = [['Project', 3], ['Edit', 0], ['View', 0], ['Layer', 0], ['Settings', 0], ['Plugins', 0], ['Vector', 4], ['Raster', 0], ['Database', 0], ['Web', 0], ['Mesh', 0], ['Processing', 3], ['Help', 0]];
const TOP_TOOLS = [
  ['new', 'open', 'save', 'newLayout', 'layouts', 'styles'],
  ['hand*', 'pan', 'zoomIn', 'zoomOut', 'zoomFull', 'zoomSel', 'zoomLayer', 'zoomNative', 'zoomLast', 'zoomNext', 'newMap', 'newMark', 'marks', 'refresh'],
  ['identify', 'action', 'v-', 'select', 'v', 'selectForm', 'v', 'deselect', 'table', 'abacus', 'cog', 'sigma', 'ruler', 'v', 'tip', 'textNote', 'v'],
];
const EDIT_TOOLS = [
  ['dataSource', 'geopackage', 'shapefile', 'spatialite', 'memory', '|', 'virtual'],
  ['editsOff', 'pencil', 'saveEdits', 'addPoly', 'vertex', 'v-', 'attrs', 'trash', 'cut', 'copy', 'paste', 'undo', 'redo'],
  ['label', 'diagram', 'labelPin', 'lab1', 'lab2', 'lab3', 'lab4', 'lab5'],
  ['search'],
  ['python'],
  ['help'],
  [],
];
const BROWSER: [number, 'open' | 'closed' | undefined, string, string][] = [
  [0, 'open', 'star', 'Favorites'],
  [1, 'open', 'drawer', 'C:\\Users\\Administrator\\Desktop\\MSA_Lab0'],
  [2, 'open', 'drawer', 'Lab0_shapedata'],
  [3, undefined, 'polySel', 'nnov_bound.shp'],
  [3, undefined, 'poly', 'nnov_bound_wgs84.shp'],
  [3, undefined, 'poly', 'nnov_water.shp'],
  [0, 'closed', 'home', 'Home'],
  [0, 'closed', 'drawer', 'C:\\'],
  [0, 'closed', 'folder', 'D:\\'],
  [0, 'closed', 'folder', 'E:\\'],
  [0, 'closed', 'folder', 'F:\\'],
  [0, undefined, 'gpkg', 'GeoPackage'],
  [0, undefined, 'feather', 'SpatiaLite'],
  [0, undefined, 'elephant', 'PostGIS'],
  [0, undefined, 'mssql', 'MSSQL'],
];
const PAGES: [string, string][] = [
  ['info', 'Information'], ['source', 'Source'], ['paint', 'Symbology'], ['label', 'Labels'], ['diagram', 'Diagrams'],
  ['cube3d', '3D View'], ['fields', 'Source Fields'], ['form', 'Attributes Form'], ['joins', 'Joins'], ['storage', 'Auxiliary Storage'],
  ['actions', 'Actions'], ['display', 'Display'], ['brush', 'Rendering'], ['epsilon', 'Variables'], ['metadata', 'Metadata'], ['deps', 'Dependencies'],
];
const LINK = 'C:\\Users\\Administrator\\Desktop\\MSA_Lab0\\Lab0_shapedata\\nnov_bound_wgs84.shp';
const SECTIONS: { title: string; label: number; rows: [string, React.ReactNode?][] }[] = [
  {
    title: 'Information from provider', label: 104, rows: [
      ['Name', 'nnov_bound_wgs84'], ['Path', <a href="#path">{LINK}</a>], ['Storage', 'ESRI Shapefile'], ['Comment'], ['Encoding', 'System'],
      ['Geometry', 'Polygon (MultiPolygon)'], ['CRS', 'EPSG:4326 - WGS 84 - Geographic'],
      ['Extent', '43.5487835000000985,56.1559621000000817 : 44.1541120999999848,56.4220450999999557'], ['Unit', 'degrees'], ['Feature count', '8'],
    ],
  },
  { title: 'Identification', label: 116, rows: [['Identifier'], ['Parent Identifier'], ['Title'], ['Type', 'dataset'], ['Language'], ['Abstract'], ['Categories'], ['Keywords']] },
  { title: 'Extent', label: 117, rows: [['CRS'], ['Spatial Extent'], ['Temporal Extent']] },
  { title: 'Access', label: 91, rows: [['Fees'], ['Licenses']] },
];

const Tools = ({ groups }: { groups: string[][] }) => (
  <>
    {groups.map((g, i) => (
      <Group key={i}>
        <Grip />
        {g.map((t, j) => {
          if (t === '|') return <Divider key={j} />;
          if (t[0] === 'v' && t.length < 3) return <DropButton key={j} $dim={t === 'v-'} aria-label="More" />;
          const name = t.replace('*', '');
          return <ToolButton key={j} $active={t.endsWith('*')} aria-label={name}><Icon name={name} /></ToolButton>;
        })}
      </Group>
    ))}
  </>
);

const Caption = ({ title }: { title: string }) => (
  <DockTitle>
    <h2>{title}</h2>
    <CaptionButton aria-label="Float"><svg width="8" height="8" fill="none" stroke="#555"><path d="M2.500 2.500v-2h5v5h-2M.5 2.500h5v5h-5z" /></svg></CaptionButton>
    <CaptionButton aria-label="Close"><svg width="8" height="8" fill="none" stroke="#555" strokeWidth="2"><path d="M1 1l6 6M7 1 1 7" /></svg></CaptionButton>
  </DockTitle>
);

export default function App() {
  return (
    <>
      <Global />
      <Window>
        <MenuBar>
          {MENUS.map(([m, k]) => <MenuItem key={m}>{m.slice(0, k)}<u>{m[k]}</u>{m.slice(k + 1)}</MenuItem>)}
        </MenuBar>
        <Toolbar><Tools groups={TOP_TOOLS} /></Toolbar>
        <Toolbar $last><Tools groups={EDIT_TOOLS} /></Toolbar>
        <Body>
          <Docks>
            <Dock>
              <Caption title="Layers" />
              <DockTools>
                {['paint', 'addGroup', 'eye', 'funnel', 'exprFilter'].map(n => <SmallTool key={n} aria-label={n}><Icon name={n} size={16} /></SmallTool>)}
                <DropButton aria-label="More" />
                {['expand', 'collapse', 'remove'].map(n => <SmallTool key={n} aria-label={n}><Icon name={n} size={16} /></SmallTool>)}
              </DockTools>
              <TreeBox>
                <Tree>
                  <LayerRow><label><Check type="checkbox" defaultChecked /><Swatch $color="#bdcf4e" /><LayerName>nnov_bound</LayerName></label></LayerRow>
                  <LayerRow $current><label><Check type="checkbox" defaultChecked /><Swatch $color="#8a3247" /><LayerName>nnov_bound_wgs84</LayerName></label></LayerRow>
                </Tree>
              </TreeBox>
            </Dock>
            <Splitter />
            <Dock $height={325}>
              <Caption title="Browser" />
              <DockTools>
                {['addLayer', 'refresh', 'funnel', 'collapse', 'info'].map(n => <SmallTool key={n} aria-label={n}><Icon name={n} size={16} /></SmallTool>)}
              </DockTools>
              <TreeBox>
                <BrowserTree>
                  {BROWSER.map(([d, s, icon, text]) => (
                    <BrowserRow key={text} $depth={d} $selected={icon === 'polySel'}>
                      <Twisty $state={s} /><Icon name={icon} size={16} />{text}
                    </BrowserRow>
                  ))}
                </BrowserTree>
                <Scroller share={100} />
              </TreeBox>
            </Dock>
          </Docks>
          <MapPane aria-label="Map">
            <MapSvg>
              <g transform={SURVEY}>
                {DISTRICTS.map(d => <path key={d} d={d} fill="#bdcf4e" />)}
                {HOLES.map(d => <path key={d} d={d} fill="#fff" />)}
                {BORDERS.map(d => <path key={d} d={d} fill="none" />)}
              </g>
            </MapSvg>
          </MapPane>
        </Body>
      </Window>

      <Dialog role="dialog" aria-label="Layer Properties">
        <TitleBar>
          <svg width="16" height="16" viewBox="0 0 16 16" fill="none">
            <circle cx="8" cy="8" r="6" stroke="#5f9e38" strokeWidth="3.500" />
            <path d="M8 8l6 6" stroke="#f0a040" strokeWidth="3" />
            <path d="M10 10l5 5" stroke="#7fba42" strokeWidth="3" />
          </svg>
          <h1>Layer Properties - nnov_bound_wgs84 | Information</h1>
          <CloseBox aria-label="Close"><svg width="8" height="8" stroke="#000" strokeWidth="2"><path d="M0 0l8 8M8 0 0 8" /></svg></CloseBox>
        </TitleBar>
        <DialogBody>
          <Sidebar>
            <SearchBox>
              <svg width="13" height="13" fill="none" stroke="#8a8a88" strokeWidth="1.300"><circle cx="5" cy="5" r="4" /><path d="M8 8l4.500 4.500" /></svg>
              <input type="text" aria-label="Search options" />
            </SearchBox>
            <SidebarBody>
              <PageList>
                {PAGES.map(([icon, text], i) => (
                  <li key={text}><PageButton $active={i === 0}><Icon name={icon} size={i === 0 ? 26 : 24} />{text}</PageButton></li>
                ))}
                <li><PageButton aria-label="More"><Icon name="flag" /></PageButton></li>
              </PageList>
              <Scroller share={84} />
            </SidebarBody>
          </Sidebar>
          <Content>
            <Report>
              <ReportText>
                {SECTIONS.map(s => (
                  <section key={s.title}>
                    <h2>{s.title}</h2>
                    <Facts $label={s.label}>
                      <tbody>
                        {s.rows.map(([k, v]) => <tr key={k}><th scope="row">{k}</th><td>{v}</td></tr>)}
                      </tbody>
                    </Facts>
                  </section>
                ))}
              </ReportText>
              <Scroller share={51} />
            </Report>
            <Actions>
              <MenuButton>Style</MenuButton>
              <PushButton $primary>OK</PushButton>
              <PushButton>Cancel</PushButton>
              <PushButton>Apply</PushButton>
              <PushButton>Help</PushButton>
            </Actions>
          </Content>
        </DialogBody>
      </Dialog>

      <Markup>
        <g fill="none" stroke={ORANGE} strokeWidth="3">
          <rect x="10.500" y="166.500" width="177" height="28" />
          <path d="M187 180.500H349M317 180.500V241.500H350" />
          <rect x="351.500" y="218.500" width="136" height="40" />
          <path d="M489 240 571 333" />
          <rect x="571.500" y="325.500" width="248" height="20" />
        </g>
        <text x="258" y="226">1</text>
        <text x="521" y="336">2</text>
      </Markup>
    </>
  );
}
